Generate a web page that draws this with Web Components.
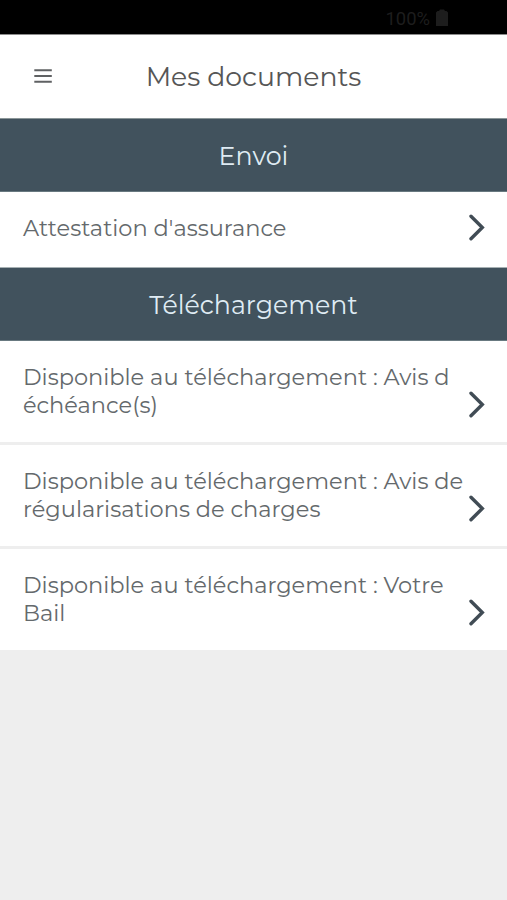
<!DOCTYPE html>
<html lang="fr"><head><meta charset="utf-8"><title>Mes documents</title>
<style>
html,body{margin:0;height:100%}
body{background:#eee;font-family:Montserrat,Inter,sans-serif}
</style></head><body>
<documents-page></documents-page>
<script>
const define=(name,html)=>customElements.define(name,class extends HTMLElement{
  constructor(){super();this.attachShadow({mode:'open'}).innerHTML=html}
});
define('status-bar',`<style>
:host{display:flex;height:35px;background:#000;color:#1d1d1d;box-sizing:border-box;border-bottom:1px solid #8c8c8c;padding:2px 59px 0 0;justify-content:flex-end;align-items:center;gap:6px;font:18.4px Roboto,sans-serif}
svg{display:block}</style>
<slot></slot><svg width="12" height="18" viewBox="0 0 12 18"><path d="M4 0.5h4L9 2h1.5L12 3.5V17H0V3.5L1.5 2H3z" fill="#1d1d1d"/></svg>`);
define('app-header',`<style>
:host{display:grid;grid-template-columns:34px 1fr 34px;height:84px;background:#fff;align-items:center;padding:0 34px 1px;box-sizing:border-box;color:#565656;font-size:26.7px;font-weight:400;border-bottom:1px solid #8b9698}
h1{font:inherit;margin:0;text-align:center;white-space:nowrap}
svg{display:block}</style>
<svg width="18" height="14" viewBox="0 0 18 14"><path d="M.3 1.2h17.5M.3 7h17.5M.3 12.8h17.5" stroke="#5f6163" stroke-width="1.9"/></svg><h1><slot></slot></h1>`);
define('section-bar',`<style>
:host{display:flex;height:73px;background:#41525d;color:#dfebf3;justify-content:center;align-items:center;box-sizing:border-box;border-bottom:1px solid #687980;padding-top:1px;font-size:25.3px;font-weight:400}
h2{font:inherit;margin:0}</style><h2><slot></slot></h2>`);
define('document-row',`<style>
:host{display:flex;background:#fff;box-sizing:border-box;height:101px;padding:22px 22px 24px 23px;justify-content:space-between;align-items:flex-end;color:#64696c;font-size:22.53px;font-weight:400;line-height:28px}
:host([single]){height:76px;padding-bottom:26px;border-bottom:1px solid #a6b0b3}
svg{display:block;flex:none}
.t{white-space:nowrap;align-self:flex-start}</style>
<div class="t"><slot></slot></div><svg width="16" height="27" viewBox="0 0 16 27"><path d="M2 2.2L13.3 13.5L2 24.8" fill="none" stroke="#414c55" stroke-width="3.4" stroke-linecap="round"/></svg>`);
define('documents-page',`<style>
:host{display:flex;flex-direction:column}
.list{display:flex;flex-direction:column;gap:3px}
.l{display:block;width:max-content}</style>
<status-bar>100%</status-bar>
<app-header>Mes documents</app-header>
<section-bar>Envoi</section-bar>
<document-row single>Attestation d'assurance</document-row>
<section-bar>Téléchargement</section-bar>
<div class="list">
<document-row><span class="l">Disponible au téléchargement : Avis d</span><span class="l">échéance(s)</span></document-row>
<document-row><span class="l">Disponible au téléchargement : Avis de</span><span class="l">régularisations de charges</span></document-row>
<document-row><span class="l">Disponible au téléchargement : Votre</span><span class="l">Bail</span></document-row>
</div>`);
</script></body></html>
